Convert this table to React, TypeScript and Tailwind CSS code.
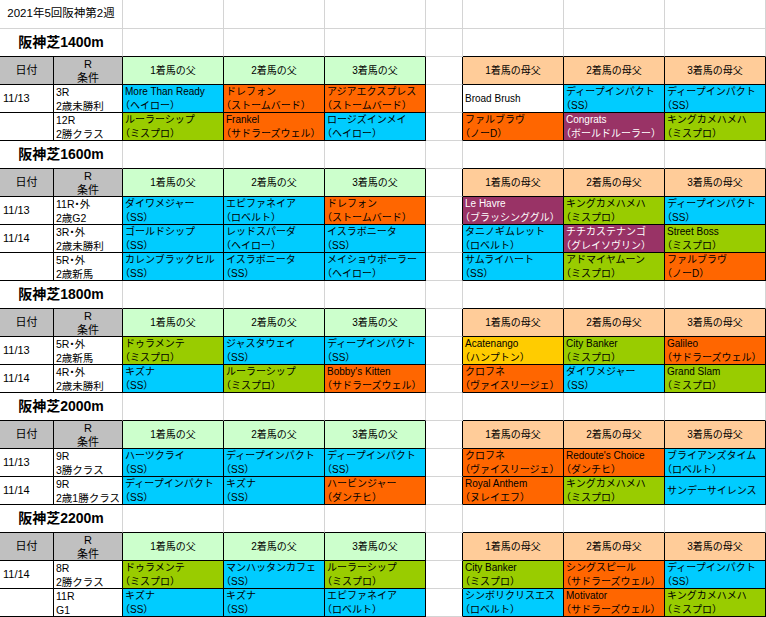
type Fill = 'b' | 'o' | 'g' | 'p' | 'y' | 'w';

const fills: Record<Fill, string> = {
  b: 'bg-[#00ccff] text-black',
  o: 'bg-[#ff6600] text-black',
  g: 'bg-[#99cc00] text-black',
  p: 'bg-[#993366] text-white',
  y: 'bg-[#ffcc00] text-black',
  w: 'bg-white text-black',
};

// name, lineage (empty = single centered line), fill
type Horse = [string, string, Fill];

interface Race {
  date: string;
  race: string;
  cond: string;
  sires: Horse[];
  dams: Horse[];
}

interface Section {
  title: string;
  races: Race[];
}

const sections: Section[] = [
  {
    title: '阪神芝1400m',
    races: [
      {
        date: '11/13', race: '3R', cond: '2歳未勝利',
        sires: [['More Than Ready', '（ヘイロー）', 'b'], ['ドレフォン', '（ストームバード）', 'o'], ['アジアエクスプレス', '（ストームバード）', 'o']],
        dams: [['Broad Brush', '', 'w'], ['ディープインパクト', '（SS）', 'b'], ['ディープインパクト', '（SS）', 'b']],
      },
      {
        date: '', race: '12R', cond: '2勝クラス',
        sires: [['ルーラーシップ', '（ミスプロ）', 'g'], ['Frankel', '（サドラーズウェル）', 'o'], ['ロージズインメイ', '（ヘイロー）', 'b']],
        dams: [['ファルブラヴ', '（ノーD）', 'o'], ['Congrats', '（ボールドルーラー）', 'p'], ['キングカメハメハ', '（ミスプロ）', 'g']],
      },
    ],
  },
  {
    title: '阪神芝1600m',
    races: [
      {
        date: '11/13', race: '11R・外', cond: '2歳G2',
        sires: [['ダイワメジャー', '（SS）', 'b'], ['エピファネイア', '（ロベルト）', 'b'], ['ドレフォン', '（ストームバード）', 'o']],
        dams: [['Le Havre', '（ブラッシンググル）', 'p'], ['キングカメハメハ', '（ミスプロ）', 'g'], ['ディープインパクト', '（SS）', 'b']],
      },
      {
        date: '11/14', race: '3R・外', cond: '2歳未勝利',
        sires: [['ゴールドシップ', '（SS）', 'b'], ['レッドスパーダ', '（ヘイロー）', 'b'], ['イスラボニータ', '（SS）', 'b']],
        dams: [['タニノギムレット', '（ロベルト）', 'b'], ['チチカステナンゴ', '（グレイソヴリン）', 'p'], ['Street Boss', '（ミスプロ）', 'g']],
      },
      {
        date: '', race: '5R・外', cond: '2歳新馬',
        sires: [['カレンブラックヒル', '（SS）', 'b'], ['イスラボニータ', '（SS）', 'b'], ['メイショウボーラー', '（ヘイロー）', 'b']],
        dams: [['サムライハート', '（SS）', 'b'], ['アドマイヤムーン', '（ミスプロ）', 'g'], ['ファルブラヴ', '（ノーD）', 'o']],
      },
    ],
  },
  {
    title: '阪神芝1800m',
    races: [
      {
        date: '11/13', race: '5R・外', cond: '2歳新馬',
        sires: [['ドゥラメンテ', '（ミスプロ）', 'g'], ['ジャスタウェイ', '（SS）', 'b'], ['ディープインパクト', '（SS）', 'b']],
        dams: [['Acatenango', '（ハンプトン）', 'y'], ['City Banker', '（ミスプロ）', 'g'], ['Galileo', '（サドラーズウェル）', 'o']],
      },
      {
        date: '11/14', race: '4R・外', cond: '2歳未勝利',
        sires: [['キズナ', '（SS）', 'b'], ['ルーラーシップ', '（ミスプロ）', 'g'], ["Bobby's Kitten", '（サドラーズウェル）', 'o']],
        dams: [['クロフネ', '（ヴァイスリージェ）', 'o'], ['ダイワメジャー', '（SS）', 'b'], ['Grand Slam', '（ミスプロ）', 'g']],
      },
    ],
  },
  {
    title: '阪神芝2000m',
    races: [
      {
        date: '11/13', race: '9R', cond: '3勝クラス',
        sires: [['ハーツクライ', '（SS）', 'b'], ['ディープインパクト', '（SS）', 'b'], ['ディープインパクト', '（SS）', 'b']],
        dams: [['クロフネ', '（ヴァイスリージェ）', 'o'], ["Redoute's Choice", '（ダンチヒ）', 'o'], ['ブライアンズタイム', '（ロベルト）', 'b']],
      },
      {
        date: '11/14', race: '9R', cond: '2歳1勝クラス',
        sires: [['ディープインパクト', '（SS）', 'b'], ['キズナ', '（SS）', 'b'], ['ハービンジャー', '（ダンチヒ）', 'o']],
        dams: [['Royal Anthem', '（ヌレイエフ）', 'o'], ['キングカメハメハ', '（ミスプロ）', 'g'], ['サンデーサイレンス', '', 'b']],
      },
    ],
  },
  {
    title: '阪神芝2200m',
    races: [
      {
        date: '11/14', race: '8R', cond: '2勝クラス',
        sires: [['ドゥラメンテ', '（ミスプロ）', 'g'], ['マンハッタンカフェ', '（SS）', 'b'], ['ルーラーシップ', '（ミスプロ）', 'g']],
        dams: [['City Banker', '（ミスプロ）', 'g'], ['シングスピール', '（サドラーズウェル）', 'o'], ['ディープインパクト', '（SS）', 'b']],
      },
      {
        date: '', race: '11R', cond: 'G1',
        sires: [['キズナ', '（SS）', 'b'], ['キズナ', '（SS）', 'b'], ['エピファネイア', '（ロベルト）', 'b']],
        dams: [['シンボリクリスエス', '（ロベルト）', 'b'], ['Motivator', '（サドラーズウェル）', 'o'], ['キングカメハメハ', '（ミスプロ）', 'g']],
      },
    ],
  },
];

// cell with its own right / bottom line
function Cell({
  w,
  right = false,
  bottom = false,
  className = '',
  children,
}: {
  w: string;
  right?: boolean;
  bottom?: boolean;
  className?: string;
  children?: React.ReactNode;
}) {
  return (
    <div
      className={`${w} shrink-0 h-full overflow-hidden whitespace-nowrap border-r border-b ${
        right ? 'border-r-black' : 'border-r-[#d4d4d4]'
      } ${bottom ? 'border-b-black' : 'border-b-[#d4d4d4]'} ${className}`}
    >
      {children}
    </div>
  );
}

function HorseCell({ horse }: { horse: Horse }) {
  const [name, line, fill] = horse;
  if (!line) {
    return (
      <Cell w="w-[101px]" right bottom className={`${fills[fill]} flex items-center pl-[2px] text-[10px]`}>
        {name}
      </Cell>
    );
  }
  return (
    <Cell w="w-[101px]" right bottom className={`${fills[fill]} flex flex-col pl-[2px] text-[10px] leading-[14px]`}>
      <span>{name}</span>
      <span>{line}</span>
    </Cell>
  );
}

function TitleRow({ title }: { title: string }) {
  return (
    <div className="flex h-[28px]">
      <Cell w="w-[123px]" bottom className="flex items-center justify-center text-[14px] font-bold">
        {title}
      </Cell>
      <Cell w="w-[101px]" bottom />
      <Cell w="w-[101px]" bottom />
      <Cell w="w-[101px]" bottom />
      <Cell w="w-[37px]" />
      <Cell w="w-[101px]" bottom />
      <Cell w="w-[101px]" bottom />
      <Cell w="w-[101px]" bottom />
    </div>
  );
}

function HeaderRow() {
  const sire = ['1着馬の父', '2着馬の父', '3着馬の父'];
  const dam = ['1着馬の母父', '2着馬の母父', '3着馬の母父'];
  return (
    <div className="flex h-[28px] text-[10px]">
      <Cell w="w-[54px]" right bottom className="bg-[#c0c0c0] flex items-center justify-center text-[11px]">
        日付
      </Cell>
      <Cell w="w-[69px]" right bottom className="bg-[#c0c0c0] flex flex-col items-center leading-[14px] text-[11px]">
        <span>R</span>
        <span>条件</span>
      </Cell>
      {sire.map((s) => (
        <Cell key={s} w="w-[101px]" right bottom className="bg-[#ccffcc] flex items-center justify-center">
          {s}
        </Cell>
      ))}
      <Cell w="w-[37px]" right />
      {dam.map((s) => (
        <Cell key={s} w="w-[101px]" right bottom className="bg-[#ffcc99] flex items-center justify-center">
          {s}
        </Cell>
      ))}
    </div>
  );
}

function RaceRow({ race }: { race: Race }) {
  return (
    <div className="flex h-[28px]">
      <Cell w="w-[54px]" right bottom className="flex items-center pl-[3px] text-[11px]">
        {race.date}
      </Cell>
      <Cell w="w-[69px]" right bottom className="flex flex-col pl-[2px] text-[10.5px] leading-[14px]">
        <span>{race.race}</span>
        <span>{race.cond}</span>
      </Cell>
      {race.sires.map((h, i) => (
        <HorseCell key={i} horse={h} />
      ))}
      <Cell w="w-[37px]" right />
      {race.dams.map((h, i) => (
        <HorseCell key={i} horse={h} />
      ))}
    </div>
  );
}

export default function App() {
  return (
    <div className="w-[766px] h-[617px] overflow-hidden bg-white text-black font-['Liberation_Sans','Noto_Sans_CJK_JP',sans-serif] [font-feature-settings:'halt']">
      {/* sheet title */}
      <div className="flex h-[29px]">
        <Cell w="w-[123px]" className="flex items-center justify-center text-[11.5px]">
          2021年5回阪神第2週
        </Cell>
        <Cell w="w-[101px]" />
        <Cell w="w-[101px]" />
        <Cell w="w-[101px]" />
        <Cell w="w-[37px]" />
        <Cell w="w-[101px]" />
        <Cell w="w-[101px]" />
        <Cell w="w-[101px]" />
      </div>

      {sections.map((sec) => (
        <div key={sec.title}>
          <TitleRow title={sec.title} />
          <HeaderRow />
          {sec.races.map((r, i) => (
            <RaceRow key={i} race={r} />
          ))}
        </div>
      ))}
    </div>
  );
}
